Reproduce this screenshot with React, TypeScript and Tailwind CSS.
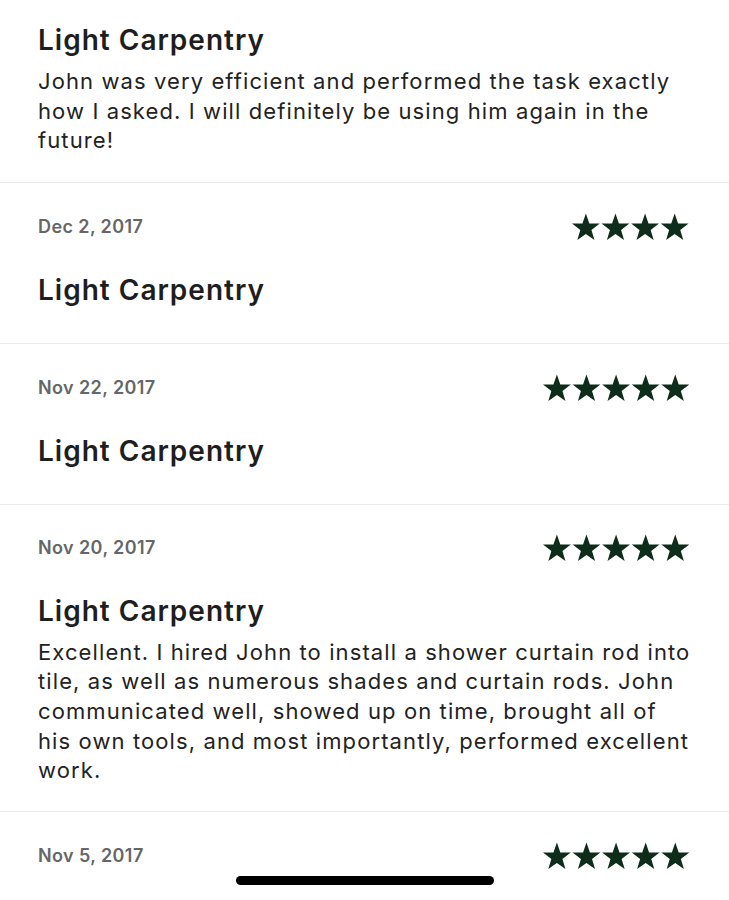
import React from "react";

function Stars({ n }: { n: number }) {
  const R = 14.6;
  const r = R * 0.4;
  const step = 29.6;
  const w = R * 2 * Math.sin((72 * Math.PI) / 180);
  const width = step * (n - 1) + w;
  const stars = [];
  for (let i = 0; i < n; i++) {
    const cx = w / 2 + i * step;
    const cy = R + 0.5;
    const pts: string[] = [];
    for (let k = 0; k < 10; k++) {
      const ang = ((-90 + k * 36) * Math.PI) / 180;
      const rad = k % 2 === 0 ? R : r;
      pts.push(`${(cx + rad * Math.cos(ang)).toFixed(2)},${(cy + rad * Math.sin(ang)).toFixed(2)}`);
    }
    stars.push(<polygon key={i} points={pts.join(" ")} fill="#0d2c19" />);
  }
  return (
    <svg width={width} height={28} viewBox={`0 0 ${width} 28`}>
      {stars}
    </svg>
  );
}

function Title() {
  return (
    <div className="text-[28px] leading-[34px] font-semibold text-[#1e1e1e] tracking-[1px] whitespace-nowrap">
      Light Carpentry
    </div>
  );
}

function Body({ lines, mt }: { lines: string[]; mt: string }) {
  return (
    <div className={`${mt} text-[22px] leading-[29.6px] text-[#222222] tracking-[1.1px]`}>
      {lines.map((l, i) => (
        <div key={i} className="whitespace-nowrap">
          {l}
        </div>
      ))}
    </div>
  );
}

function Header({ date, stars }: { date: string; stars: number }) {
  return (
    <div className="flex h-[28px] items-center justify-between">
      <span className="text-[18px] leading-[22px] font-semibold text-[#666666] tracking-[0.4px]">{date}</span>
      <Stars n={stars} />
    </div>
  );
}

export default function App() {
  return (
    <div
      className="relative h-[900px] w-[729px] overflow-hidden bg-white"
      style={{ fontFamily: "Inter, 'Liberation Sans', sans-serif" }}
    >
      <div className="border-b border-[#ebebeb] pl-[38px] pr-[40px] pt-[23px] pb-[26px]">
        <Title />
        <Body
          mt="mt-[10px]"
          lines={[
            "John was very efficient and performed the task exactly",
            "how I asked. I will definitely be using him again in the",
            "future!",
          ]}
        />
      </div>
      <div className="border-b border-[#ebebeb] pl-[38px] pr-[40px] pt-[30px] pb-[36px]">
        <Header date="Dec 2, 2017" stars={4} />
        <div className="mt-[32px]">
          <Title />
        </div>
      </div>
      <div className="border-b border-[#ebebeb] pl-[38px] pr-[40px] pt-[30px] pb-[36px]">
        <Header date="Nov 22, 2017" stars={5} />
        <div className="mt-[32px]">
          <Title />
        </div>
      </div>
      <div className="border-b border-[#ebebeb] pl-[38px] pr-[40px] pt-[29px] pb-[25px]">
        <Header date="Nov 20, 2017" stars={5} />
        <div className="mt-[32px]">
          <Title />
        </div>
        <Body
          mt="mt-[10px]"
          lines={[
            "Excellent. I hired John to install a shower curtain rod into",
            "tile, as well as numerous shades and curtain rods. John",
            "communicated well, showed up on time, brought all of",
            "his own tools, and most importantly, performed excellent",
            "work.",
          ]}
        />
      </div>
      <div className="pl-[38px] pr-[40px] pt-[30px]">
        <Header date="Nov 5, 2017" stars={5} />
      </div>
      <div className="absolute left-[236px] top-[876px] h-[9px] w-[258px] rounded-full bg-black" />
    </div>
  );
}
